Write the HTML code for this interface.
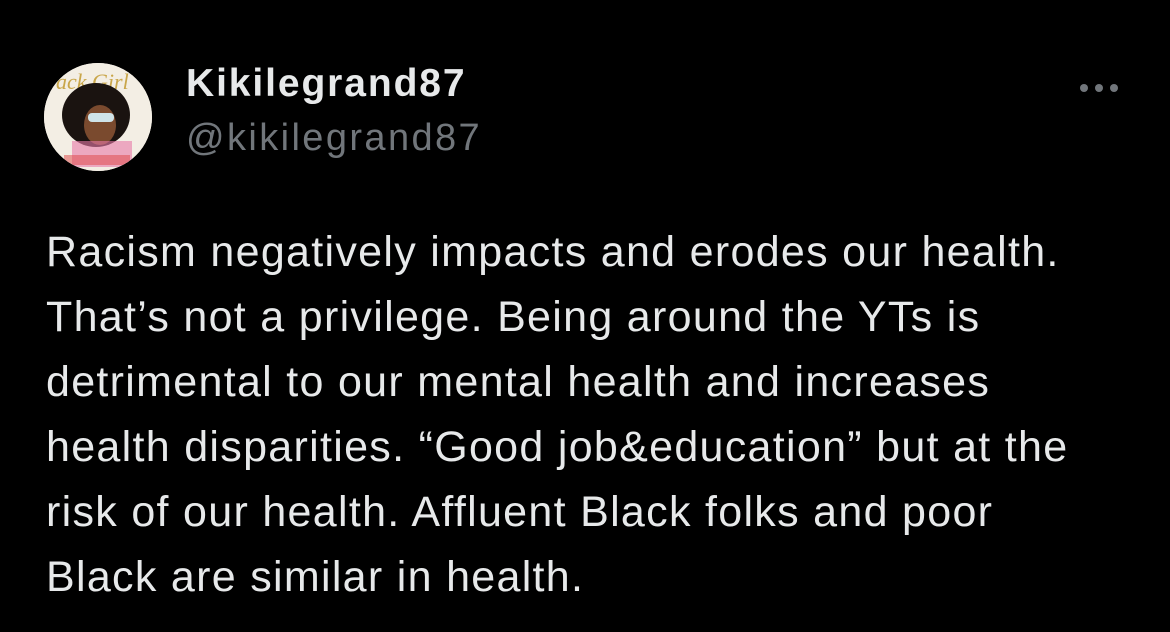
<!DOCTYPE html>
<html><head><style>
body{margin:0;background:#000;width:1170px;height:632px;overflow:hidden;font-family:"Liberation Sans",sans-serif;color:#e7e9ea;position:relative}
.av{position:absolute;left:44px;top:63px;width:108px;height:108px;border-radius:50%;background:#f4efe6;overflow:hidden}
.name{position:absolute;left:186px;top:62px;font-size:39px;font-weight:bold;color:#e7e9ea;letter-spacing:1.9px}
.handle{position:absolute;left:186px;top:117px;font-size:38px;color:#71767b;letter-spacing:2.4px}
.dots{position:absolute;left:1078px;top:82px}
.body{position:absolute;left:46px;top:220px;font-size:43px;line-height:65px;width:1110px;white-space:nowrap;letter-spacing:1.3px}
</style></head><body>
<div class="av">
<svg width="108" height="108">
<rect width="108" height="108" fill="#f3eee4"/>
<text x="12" y="26" font-size="22" fill="#c9a64a" font-style="italic" font-family="Liberation Serif">ack Girl</text>
<ellipse cx="52" cy="52" rx="34" ry="32" fill="#1a1310"/>
<ellipse cx="56" cy="62" rx="16" ry="20" fill="#7a4a2e"/>
<rect x="44" y="50" width="26" height="9" rx="4" fill="#cfe3e8"/>
<rect x="28" y="78" width="60" height="26" fill="#e77aa8" opacity="0.6"/>
<rect x="20" y="92" width="66" height="10" fill="#d44" opacity="0.5"/>
</svg></div>
<div class="name">Kikilegrand87</div>
<div class="handle">@kikilegrand87</div>
<svg class="dots" width="44" height="12"><circle cx="6" cy="6" r="4" fill="#71767b"/><circle cx="21" cy="6" r="4" fill="#71767b"/><circle cx="36" cy="6" r="4" fill="#71767b"/></svg>
<div class="body">Racism negatively impacts and erodes our health.<br>That’s not a privilege. Being around the YTs is<br>detrimental to our mental health and increases<br>health disparities. “Good job&amp;education” but at the<br>risk of our health. Affluent Black folks and poor<br>Black are similar in health.</div>
</body></html>
